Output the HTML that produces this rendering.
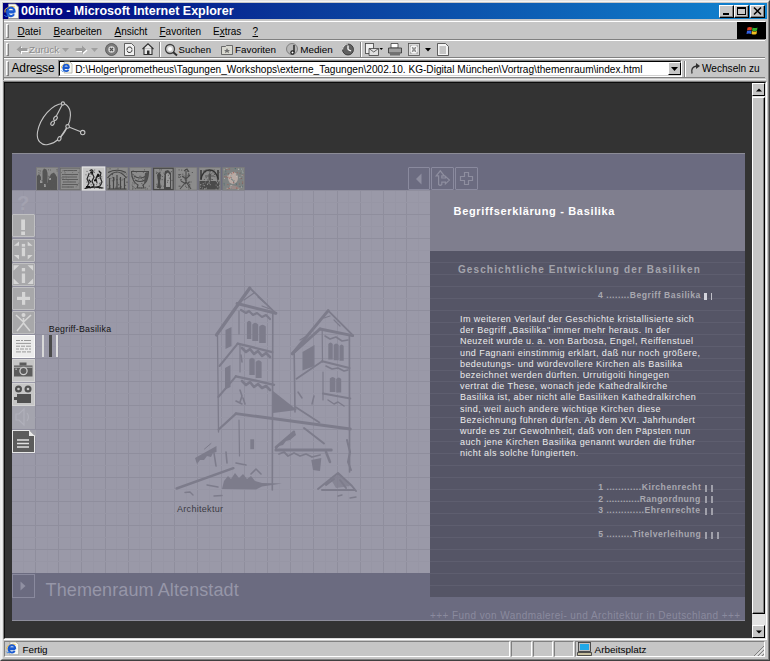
<!DOCTYPE html><html><head><meta charset="utf-8"><style>
*{margin:0;padding:0;box-sizing:border-box}
html,body{width:770px;height:661px;overflow:hidden;background:#c6c6c6;font-family:"Liberation Sans",sans-serif}
.ab{position:absolute}
.t{position:absolute;white-space:nowrap;line-height:1}
svg{position:absolute;overflow:visible}
u{text-decoration:underline;text-underline-offset:1px;text-decoration-thickness:1px}
</style></head><body>

<div class="ab" style="left:0px;top:0px;width:770px;height:661px;background:#c6c6c6;border-top:1px solid #e4e4e4;border-left:1px solid #ececec;border-right:1px solid #404040;border-bottom:1px solid #404040"></div>
<div class="ab" style="left:1px;top:1px;width:768px;height:659px;border-top:1px solid #f4f4f4;border-left:1px solid #f0f0f0;border-right:1px solid #808080;border-bottom:1px solid #808080"></div>
<div class="ab" style="left:2px;top:19px;width:1px;height:640px;background:#e0e0e0"></div>
<div class="ab" style="left:3px;top:3px;width:764px;height:16px;background:linear-gradient(90deg,#000080 0%,#0a3a9a 40%,#1084d0 100%)"></div>
<div class="t" style="left:21px;top:4px;font-size:12.5px;font-weight:bold;color:#fff;line-height:14px">00intro - Microsoft Internet Explorer</div>
<svg style="left:3px;top:3px" width="17" height="17" viewBox="0 0 17 17"><g transform="translate(0 0) scale(1)"><path d="M5.5 1h7l3 3v11.5h-10z" fill="#f8f8f0" stroke="#9a9a90" stroke-width="0.8"/><path d="M2 9.5 Q1 6 4 5 Q10 2.5 12 4" fill="none" stroke="#f0c040" stroke-width="1"/><path d="M11.5 9.3H4.3A3.6 3.6 0 0 0 11 11.2" fill="none" stroke="#1a5ad0" stroke-width="2.2"/><path d="M4.3 8.3A3.6 3.6 0 0 1 11.5 8.3z" fill="none" stroke="#1a5ad0" stroke-width="2.2"/><path d="M1.5 12 Q2 14.5 6 12.5" fill="none" stroke="#2a7ae0" stroke-width="1"/></g></svg>
<div class="ab" style="left:719px;top:5px;width:15px;height:13px;background:#c6c6c6;border-top:1px solid #fff;border-left:1px solid #fff;border-right:1px solid #000;border-bottom:1px solid #000"></div>
<div class="ab" style="left:720px;top:6px;width:13px;height:11px;border-right:1px solid #808080;border-bottom:1px solid #808080"></div>
<div class="ab" style="left:723px;top:13px;width:6px;height:2px;background:#000"></div>
<div class="ab" style="left:734px;top:5px;width:15px;height:13px;background:#c6c6c6;border-top:1px solid #fff;border-left:1px solid #fff;border-right:1px solid #000;border-bottom:1px solid #000"></div>
<div class="ab" style="left:735px;top:6px;width:13px;height:11px;border-right:1px solid #808080;border-bottom:1px solid #808080"></div>
<div class="ab" style="left:737px;top:7px;width:9px;height:8px;border:1px solid #000;border-top-width:2px"></div>
<div class="ab" style="left:750px;top:5px;width:15px;height:13px;background:#c6c6c6;border-top:1px solid #fff;border-left:1px solid #fff;border-right:1px solid #000;border-bottom:1px solid #000"></div>
<div class="ab" style="left:751px;top:6px;width:13px;height:11px;border-right:1px solid #808080;border-bottom:1px solid #808080"></div>
<svg style="left:753px;top:7px" width="9" height="8" viewBox="0 0 9 8"><path d="M1 0.5L8 7.5M8 0.5L1 7.5" stroke="#000" stroke-width="1.6"/></svg>
<div class="ab" style="left:4px;top:21px;width:761px;height:19px;border-top:1px solid #fff;border-bottom:1px solid #808080"></div>
<div class="ab" style="left:6px;top:24px;width:3px;height:14px;border-left:1px solid #fff;border-right:1px solid #808080;border-top:1px solid #fff;border-bottom:1px solid #808080"></div>
<div class="ab" style="left:4px;top:40px;width:761px;height:18px;border-top:1px solid #fff;border-bottom:1px solid #808080"></div>
<div class="ab" style="left:6px;top:43px;width:3px;height:13px;border-left:1px solid #fff;border-right:1px solid #808080;border-top:1px solid #fff;border-bottom:1px solid #808080"></div>
<div class="ab" style="left:4px;top:58px;width:761px;height:20px;border-top:1px solid #fff;border-bottom:1px solid #808080"></div>
<div class="ab" style="left:6px;top:61px;width:3px;height:15px;border-left:1px solid #fff;border-right:1px solid #808080;border-top:1px solid #fff;border-bottom:1px solid #808080"></div>
<div class="ab" style="left:3px;top:19px;width:1px;height:61px;background:#808080"></div>
<div class="ab" style="left:737px;top:22px;width:29px;height:17px;background:#000"></div>
<svg style="left:746px;top:24px" width="13" height="13" viewBox="0 0 13 13">
<path d="M1.5 3.5 Q4 2.5 6 3.5 L5.5 6.5 Q3.5 5.5 1 6.5z" fill="#e04020"/>
<path d="M6.5 3.5 Q9 4.5 11.5 3.5 L11 6.5 Q8.5 7.5 6 6.5z" fill="#30b030"/>
<path d="M1 7 Q3.5 6 5.5 7 L5 10 Q3 9 0.5 10z" fill="#3060e0"/>
<path d="M6 7 Q8.5 8 11 7 L10.5 10 Q8 11 5.5 10z" fill="#f0c020"/>
</svg>
<div class="t" style="left:17.5px;top:26px;font-size:10px;color:#000;line-height:11px"><u>D</u>atei</div>
<div class="t" style="left:53.5px;top:26px;font-size:10px;color:#000;line-height:11px"><u>B</u>earbeiten</div>
<div class="t" style="left:114.5px;top:26px;font-size:10px;color:#000;line-height:11px"><u>A</u>nsicht</div>
<div class="t" style="left:159.5px;top:26px;font-size:10px;color:#000;line-height:11px"><u>F</u>avoriten</div>
<div class="t" style="left:213px;top:26px;font-size:10px;color:#000;line-height:11px">E<u>x</u>tras</div>
<div class="t" style="left:252.5px;top:26px;font-size:10px;color:#000;line-height:11px"><u>?</u></div>
<svg style="left:16px;top:45px" width="13" height="11" viewBox="0 0 13 11"><path d="M1.5 5.5L6 1.5V4H12.5V7H6V9.5z" fill="#fff"/><path d="M0.5 4.5L5 0.5V3H11.5V6H5V8.5z" fill="#9c9c9c"/></svg>
<div class="t" style="left:29px;top:44px;font-size:9.6px;line-height:11px;font-size:9.9px;color:#8c8c8c;text-shadow:1px 1px 0 #f0f0f0">Zurück</div>
<svg style="left:62px;top:48px" width="7" height="4" viewBox="0 0 7 4"><path d="M0 0H7L3.5 4z" fill="#a0a0a0"/></svg>
<svg style="left:75px;top:45px" width="13" height="11" viewBox="0 0 13 11"><path d="M12.5 5.5L8 1.5V4H1.5V7H8V9.5z" fill="#fff"/><path d="M11.5 4.5L7 0.5V3H0.5V6H7V8.5z" fill="#9c9c9c"/></svg>
<svg style="left:91px;top:48px" width="7" height="4" viewBox="0 0 7 4"><path d="M0 0H7L3.5 4z" fill="#a0a0a0"/></svg>
<svg style="left:105px;top:43px" width="13" height="13" viewBox="0 0 13 13"><circle cx="6.5" cy="6.5" r="6" fill="#7a7a7a" stroke="#505050" stroke-width="0.8"/><circle cx="6.5" cy="6.5" r="3.2" fill="#d8d8d8"/><path d="M5 5L8 8M8 5L5 8" stroke="#505050" stroke-width="1.2"/></svg>
<svg style="left:124px;top:43px" width="11" height="13" viewBox="0 0 11 13"><path d="M0.5 0.5H7.5L10.5 3.5V12.5H0.5z" fill="#f0f0f0" stroke="#404040" stroke-width="0.8"/><path d="M3 7A2.5 2.5 0 0 1 8 6M8 6.5A2.5 2.5 0 0 1 3 7.5" stroke="#404040" stroke-width="1" fill="none"/></svg>
<svg style="left:142px;top:43px" width="12" height="12" viewBox="0 0 12 12"><path d="M0.5 6L6 0.8L11.5 6M2 5V11.5H10V5" fill="#e8e8e8" stroke="#303030" stroke-width="1.1"/><rect x="5" y="7.5" width="2.5" height="4" fill="#303030"/></svg>
<div class="ab" style="left:159px;top:42px;width:2px;height:15px;border-left:1px solid #808080;border-right:1px solid #fff"></div>
<svg style="left:164px;top:43px" width="14" height="13" viewBox="0 0 14 13"><circle cx="6" cy="6" r="4.5" fill="#d0d0d0" stroke="#404040" stroke-width="1.3"/><circle cx="6" cy="6" r="2" fill="#fff"/><path d="M9 9L13 12.5" stroke="#303030" stroke-width="2"/></svg>
<div class="t" style="left:178.5px;top:44px;font-size:9.6px;line-height:11px;color:#000">Suchen</div>
<svg style="left:221px;top:44px" width="12" height="11" viewBox="0 0 12 11"><path d="M0.5 2.5H4.5L5.5 1.5H11.5V10.5H0.5z" fill="#d8d8d0" stroke="#505050" stroke-width="0.8"/><path d="M6 4L7 6H9L7.5 7.3L8 9.3L6 8L4 9.3L4.5 7.3L3 6H5z" fill="#707070"/></svg>
<div class="t" style="left:235px;top:44px;font-size:9.6px;line-height:11px;font-size:9.85px;color:#000">Favoriten</div>
<svg style="left:286px;top:43px" width="13" height="13" viewBox="0 0 13 13"><circle cx="6" cy="6" r="5.5" fill="#b8b8b8" stroke="#707070" stroke-width="0.8"/><path d="M8 2V9" stroke="#202020" stroke-width="1.4"/><circle cx="6.5" cy="9.5" r="2.2" fill="#202020"/><circle cx="6.5" cy="9.5" r="1" fill="#fff"/></svg>
<div class="t" style="left:300.3px;top:44px;font-size:9.6px;line-height:11px;font-size:9.9px;color:#000">Medien</div>
<svg style="left:342px;top:43px" width="12" height="13" viewBox="0 0 12 13"><circle cx="6" cy="6.5" r="5.5" fill="#606060" stroke="#303030" stroke-width="0.8"/><path d="M6 6.5L6 2.5M6 6.5L9 8" stroke="#fff" stroke-width="1.3"/><path d="M0.5 6.5A5.5 5.5 0 0 1 6 1" stroke="#e0e0e0" stroke-width="1.2" fill="none"/></svg>
<div class="ab" style="left:360px;top:42px;width:2px;height:15px;border-left:1px solid #808080;border-right:1px solid #fff"></div>
<svg style="left:365px;top:43px" width="18" height="13" viewBox="0 0 18 13"><rect x="0.5" y="0.5" width="8" height="10" fill="#f0f0f0" stroke="#404040" stroke-width="0.8"/><path d="M4 5.5H13.5V12.5H4z" fill="#e0e0e0" stroke="#404040" stroke-width="0.8"/><path d="M4 5.5L8.75 9L13.5 5.5" stroke="#404040" stroke-width="0.8" fill="none"/><path d="M14.5 5H18L16.25 7z" fill="#000"/></svg>
<svg style="left:388px;top:43px" width="14" height="13" viewBox="0 0 14 13"><path d="M3 0.5H10V5H3z" fill="#fff" stroke="#404040" stroke-width="0.8"/><path d="M0.5 5H13.5V10H0.5z" fill="#a0a0a0" stroke="#303030" stroke-width="0.8"/><path d="M2 10H12V12.5H2z" fill="#707070"/></svg>
<svg style="left:408px;top:43px" width="12" height="13" viewBox="0 0 12 13"><rect x="0.5" y="0.5" width="11" height="12" fill="#d8d8d8" stroke="#505050" stroke-width="0.8"/><path d="M2.5 2.5L9.5 10.5M2.5 10.5L9.5 2.5" stroke="#909090" stroke-width="1.2"/><rect x="3.5" y="3.5" width="5" height="6" fill="none" stroke="#fff" stroke-width="0.8"/></svg>
<svg style="left:425px;top:48px" width="6" height="4" viewBox="0 0 6 4"><path d="M0 0H6L3 3.5z" fill="#000"/></svg>
<svg style="left:437px;top:43px" width="12" height="13" viewBox="0 0 12 13"><path d="M0.5 0.5H8.5L11.5 3.5V12.5H0.5z" fill="#f4f4f4" stroke="#404040" stroke-width="0.8"/><path d="M2.5 4H9M2.5 6H9M2.5 8H9M2.5 10H9" stroke="#808080" stroke-width="0.8"/></svg>
<div class="t" style="left:11.5px;top:62px;font-size:12px;letter-spacing:-0.15px;color:#000;line-height:13px">Adre<u>s</u>se</div>
<div class="ab" style="left:58px;top:60px;width:624px;height:17px;background:#fff;border-top:1px solid #808080;border-left:1px solid #808080;border-right:1px solid #fff;border-bottom:1px solid #fff"></div>
<div class="ab" style="left:59px;top:61px;width:622px;height:15px;border-top:1px solid #000;border-left:1px solid #000;border-right:1px solid #d0d0d0;border-bottom:1px solid #d0d0d0"></div>
<svg style="left:60px;top:61px" width="15" height="15" viewBox="0 0 17 17"><g transform="translate(0 0) scale(0.88)"><path d="M5.5 1h7l3 3v11.5h-10z" fill="#f8f8f0" stroke="#9a9a90" stroke-width="0.8"/><path d="M2 9.5 Q1 6 4 5 Q10 2.5 12 4" fill="none" stroke="#f0c040" stroke-width="1"/><path d="M11.5 9.3H4.3A3.6 3.6 0 0 0 11 11.2" fill="none" stroke="#1a5ad0" stroke-width="2.2"/><path d="M4.3 8.3A3.6 3.6 0 0 1 11.5 8.3z" fill="none" stroke="#1a5ad0" stroke-width="2.2"/><path d="M1.5 12 Q2 14.5 6 12.5" fill="none" stroke="#2a7ae0" stroke-width="1"/></g></svg>
<div class="t" style="left:75.3px;top:64px;font-size:10.1px;color:#000;line-height:12px">D:\Holger\prometheus\Tagungen_Workshops\externe_Tagungen\2002.10. KG-Digital München\Vortrag\themenraum\index.html</div>
<div class="ab" style="left:668px;top:62px;width:13px;height:13px;background:#c6c6c6;border-top:1px solid #fff;border-left:1px solid #fff;border-right:1px solid #000;border-bottom:1px solid #000"></div>
<svg style="left:671px;top:67px" width="7" height="4" viewBox="0 0 7 4"><path d="M0 0H7L3.5 4z" fill="#000"/></svg>
<div class="ab" style="left:684px;top:61px;width:2px;height:16px;border-left:1px solid #808080;border-right:1px solid #fff"></div>
<svg style="left:690px;top:62px" width="11" height="13" viewBox="0 0 11 13"><path d="M2 11.5Q0.5 5 6.5 4" stroke="#303030" stroke-width="1.3" fill="none"/><path d="M6 1L10 4L6 7z" fill="#303030"/></svg>
<div class="t" style="left:702px;top:63px;font-size:10.1px;color:#000;line-height:12px">Wechseln zu</div>
<div class="ab" style="left:3px;top:81px;width:764px;height:559px;border-top:1px solid #808080;border-left:1px solid #808080;border-right:1px solid #fff;border-bottom:1px solid #fff"></div>
<div class="ab" style="left:4px;top:82px;width:762px;height:557px;border-top:1px solid #0c0c0c;border-left:1px solid #0c0c0c;border-right:1px solid #dcdcdc;border-bottom:1px solid #dcdcdc"></div>
<div class="ab" style="left:5px;top:83px;width:747px;height:555px;background:#333"></div>
<div class="ab" style="left:4px;top:79px;width:762px;height:1px;background:#ececec"></div>
<div class="ab" style="left:12px;top:153px;width:733px;height:468px;background:#6b6b80;border-top:1px solid #8c8c96;border-bottom:1px solid #8e8e9c"></div>
<div class="ab" style="left:12px;top:190px;width:418px;height:383px;background:#9a99a8"></div>
<div class="ab" style="left:23px;top:190px;width:1px;height:383px;background:#9796a5"></div>
<div class="ab" style="left:35px;top:190px;width:1px;height:383px;background:#8f8e9d"></div>
<div class="ab" style="left:47px;top:190px;width:1px;height:383px;background:#9796a5"></div>
<div class="ab" style="left:58px;top:190px;width:1px;height:383px;background:#8f8e9d"></div>
<div class="ab" style="left:70px;top:190px;width:1px;height:383px;background:#9796a5"></div>
<div class="ab" style="left:81px;top:190px;width:1px;height:383px;background:#8f8e9d"></div>
<div class="ab" style="left:93px;top:190px;width:1px;height:383px;background:#9796a5"></div>
<div class="ab" style="left:105px;top:190px;width:1px;height:383px;background:#8f8e9d"></div>
<div class="ab" style="left:116px;top:190px;width:1px;height:383px;background:#9796a5"></div>
<div class="ab" style="left:128px;top:190px;width:1px;height:383px;background:#8f8e9d"></div>
<div class="ab" style="left:139px;top:190px;width:1px;height:383px;background:#9796a5"></div>
<div class="ab" style="left:151px;top:190px;width:1px;height:383px;background:#8f8e9d"></div>
<div class="ab" style="left:163px;top:190px;width:1px;height:383px;background:#9796a5"></div>
<div class="ab" style="left:174px;top:190px;width:1px;height:383px;background:#8f8e9d"></div>
<div class="ab" style="left:186px;top:190px;width:1px;height:383px;background:#9796a5"></div>
<div class="ab" style="left:197px;top:190px;width:1px;height:383px;background:#8f8e9d"></div>
<div class="ab" style="left:209px;top:190px;width:1px;height:383px;background:#9796a5"></div>
<div class="ab" style="left:221px;top:190px;width:1px;height:383px;background:#8f8e9d"></div>
<div class="ab" style="left:232px;top:190px;width:1px;height:383px;background:#9796a5"></div>
<div class="ab" style="left:244px;top:190px;width:1px;height:383px;background:#8f8e9d"></div>
<div class="ab" style="left:255px;top:190px;width:1px;height:383px;background:#9796a5"></div>
<div class="ab" style="left:267px;top:190px;width:1px;height:383px;background:#8f8e9d"></div>
<div class="ab" style="left:279px;top:190px;width:1px;height:383px;background:#9796a5"></div>
<div class="ab" style="left:290px;top:190px;width:1px;height:383px;background:#8f8e9d"></div>
<div class="ab" style="left:302px;top:190px;width:1px;height:383px;background:#9796a5"></div>
<div class="ab" style="left:313px;top:190px;width:1px;height:383px;background:#8f8e9d"></div>
<div class="ab" style="left:325px;top:190px;width:1px;height:383px;background:#9796a5"></div>
<div class="ab" style="left:337px;top:190px;width:1px;height:383px;background:#8f8e9d"></div>
<div class="ab" style="left:348px;top:190px;width:1px;height:383px;background:#9796a5"></div>
<div class="ab" style="left:360px;top:190px;width:1px;height:383px;background:#8f8e9d"></div>
<div class="ab" style="left:371px;top:190px;width:1px;height:383px;background:#9796a5"></div>
<div class="ab" style="left:383px;top:190px;width:1px;height:383px;background:#8f8e9d"></div>
<div class="ab" style="left:395px;top:190px;width:1px;height:383px;background:#9796a5"></div>
<div class="ab" style="left:406px;top:190px;width:1px;height:383px;background:#8f8e9d"></div>
<div class="ab" style="left:418px;top:190px;width:1px;height:383px;background:#9796a5"></div>
<div class="ab" style="left:12px;top:190px;width:418px;height:1px;background:#8f8e9d"></div>
<div class="ab" style="left:12px;top:202px;width:418px;height:1px;background:#9796a5"></div>
<div class="ab" style="left:12px;top:214px;width:418px;height:1px;background:#8f8e9d"></div>
<div class="ab" style="left:12px;top:226px;width:418px;height:1px;background:#9796a5"></div>
<div class="ab" style="left:12px;top:238px;width:418px;height:1px;background:#8f8e9d"></div>
<div class="ab" style="left:12px;top:250px;width:418px;height:1px;background:#9796a5"></div>
<div class="ab" style="left:12px;top:262px;width:418px;height:1px;background:#8f8e9d"></div>
<div class="ab" style="left:12px;top:274px;width:418px;height:1px;background:#9796a5"></div>
<div class="ab" style="left:12px;top:286px;width:418px;height:1px;background:#8f8e9d"></div>
<div class="ab" style="left:12px;top:298px;width:418px;height:1px;background:#9796a5"></div>
<div class="ab" style="left:12px;top:310px;width:418px;height:1px;background:#8f8e9d"></div>
<div class="ab" style="left:12px;top:322px;width:418px;height:1px;background:#9796a5"></div>
<div class="ab" style="left:12px;top:334px;width:418px;height:1px;background:#8f8e9d"></div>
<div class="ab" style="left:12px;top:346px;width:418px;height:1px;background:#9796a5"></div>
<div class="ab" style="left:12px;top:358px;width:418px;height:1px;background:#8f8e9d"></div>
<div class="ab" style="left:12px;top:370px;width:418px;height:1px;background:#9796a5"></div>
<div class="ab" style="left:12px;top:381px;width:418px;height:1px;background:#8f8e9d"></div>
<div class="ab" style="left:12px;top:393px;width:418px;height:1px;background:#9796a5"></div>
<div class="ab" style="left:12px;top:405px;width:418px;height:1px;background:#8f8e9d"></div>
<div class="ab" style="left:12px;top:417px;width:418px;height:1px;background:#9796a5"></div>
<div class="ab" style="left:12px;top:429px;width:418px;height:1px;background:#8f8e9d"></div>
<div class="ab" style="left:12px;top:441px;width:418px;height:1px;background:#9796a5"></div>
<div class="ab" style="left:12px;top:453px;width:418px;height:1px;background:#8f8e9d"></div>
<div class="ab" style="left:12px;top:465px;width:418px;height:1px;background:#9796a5"></div>
<div class="ab" style="left:12px;top:477px;width:418px;height:1px;background:#8f8e9d"></div>
<div class="ab" style="left:12px;top:489px;width:418px;height:1px;background:#9796a5"></div>
<div class="ab" style="left:12px;top:501px;width:418px;height:1px;background:#8f8e9d"></div>
<div class="ab" style="left:12px;top:513px;width:418px;height:1px;background:#9796a5"></div>
<div class="ab" style="left:12px;top:525px;width:418px;height:1px;background:#8f8e9d"></div>
<div class="ab" style="left:12px;top:537px;width:418px;height:1px;background:#9796a5"></div>
<div class="ab" style="left:12px;top:549px;width:418px;height:1px;background:#8f8e9d"></div>
<div class="ab" style="left:12px;top:561px;width:418px;height:1px;background:#9796a5"></div>
<div class="ab" style="left:430px;top:190px;width:315px;height:61px;background:#7f7e8e"></div>
<div class="ab" style="left:430px;top:251px;width:315px;height:346px;background:#555566"></div>
<div class="ab" style="left:430px;top:262px;width:315px;height:1px;background:#5e5e6f"></div>
<div class="ab" style="left:430px;top:274px;width:315px;height:1px;background:#5e5e6f"></div>
<div class="ab" style="left:430px;top:286px;width:315px;height:1px;background:#5e5e6f"></div>
<div class="ab" style="left:430px;top:298px;width:315px;height:1px;background:#5e5e6f"></div>
<div class="ab" style="left:430px;top:310px;width:315px;height:1px;background:#5e5e6f"></div>
<div class="ab" style="left:430px;top:322px;width:315px;height:1px;background:#5e5e6f"></div>
<div class="ab" style="left:430px;top:334px;width:315px;height:1px;background:#5e5e6f"></div>
<div class="ab" style="left:430px;top:346px;width:315px;height:1px;background:#5e5e6f"></div>
<div class="ab" style="left:430px;top:358px;width:315px;height:1px;background:#5e5e6f"></div>
<div class="ab" style="left:430px;top:370px;width:315px;height:1px;background:#5e5e6f"></div>
<div class="ab" style="left:430px;top:381px;width:315px;height:1px;background:#5e5e6f"></div>
<div class="ab" style="left:430px;top:393px;width:315px;height:1px;background:#5e5e6f"></div>
<div class="ab" style="left:430px;top:405px;width:315px;height:1px;background:#5e5e6f"></div>
<div class="ab" style="left:430px;top:417px;width:315px;height:1px;background:#5e5e6f"></div>
<div class="ab" style="left:430px;top:429px;width:315px;height:1px;background:#5e5e6f"></div>
<div class="ab" style="left:430px;top:441px;width:315px;height:1px;background:#5e5e6f"></div>
<div class="ab" style="left:430px;top:453px;width:315px;height:1px;background:#5e5e6f"></div>
<div class="ab" style="left:430px;top:465px;width:315px;height:1px;background:#5e5e6f"></div>
<div class="ab" style="left:430px;top:477px;width:315px;height:1px;background:#5e5e6f"></div>
<div class="ab" style="left:430px;top:489px;width:315px;height:1px;background:#5e5e6f"></div>
<div class="ab" style="left:430px;top:501px;width:315px;height:1px;background:#5e5e6f"></div>
<div class="ab" style="left:430px;top:513px;width:315px;height:1px;background:#5e5e6f"></div>
<div class="ab" style="left:430px;top:525px;width:315px;height:1px;background:#5e5e6f"></div>
<div class="ab" style="left:430px;top:537px;width:315px;height:1px;background:#5e5e6f"></div>
<div class="ab" style="left:430px;top:549px;width:315px;height:1px;background:#5e5e6f"></div>
<div class="ab" style="left:430px;top:561px;width:315px;height:1px;background:#5e5e6f"></div>
<div class="ab" style="left:430px;top:573px;width:315px;height:1px;background:#5e5e6f"></div>
<div class="ab" style="left:430px;top:585px;width:315px;height:1px;background:#5e5e6f"></div>
<svg style="left:0;top:0" width="770" height="661" viewBox="0 0 770 661">
<g fill="none" stroke="#c4c4c4" stroke-width="1.1">
<path d="M62.9 103.5 C52 104 40 118 37.5 132 C36 141 42 146 48 144.5 C56 143 63 136 67.6 126.4 C71 120 72 110 67 105.5 C66 104.5 64.5 103.5 62.9 103.5z"/>
<path d="M62.9 103.5 L55.3 118"/>
<path d="M67.6 126.4 L59.3 138.8"/>
<path d="M67.6 126.4 L82.7 132.6"/>
<ellipse cx="62.9" cy="103.5" rx="1.6" ry="1.6" fill="#333"/>
<ellipse cx="55.5" cy="118.3" rx="1.5" ry="2.3" transform="rotate(35 55.5 118.3)" fill="#333"/>
<ellipse cx="52.6" cy="123.2" rx="1.5" ry="2.3" transform="rotate(35 52.6 123.2)" fill="#333"/>
<ellipse cx="67.6" cy="126.4" rx="1.8" ry="1.8" fill="#333"/>
<ellipse cx="59.3" cy="138.8" rx="1.6" ry="2.2" transform="rotate(25 59.3 138.8)" fill="#333"/>
<ellipse cx="82.7" cy="132.6" rx="2.2" ry="2.2" fill="#333"/>
</g></svg>
<svg style="left:0;top:0" width="770" height="661" viewBox="0 0 770 661"><rect x="36.5" y="167.5" width="21.5" height="22.5" fill="#8c8c8c" stroke="#7a7a7a" stroke-width="0.8"/><rect x="60.0" y="167.5" width="21.5" height="22.5" fill="#8c8c8c" stroke="#7a7a7a" stroke-width="0.8"/><rect x="82.3" y="167" width="22.5" height="23" fill="#c6c6c6" stroke="#e4e4e4" stroke-width="1.2"/><rect x="106.5" y="167.5" width="21.5" height="22.5" fill="#8c8c8c" stroke="#7a7a7a" stroke-width="0.8"/><rect x="129.7" y="167.5" width="21.5" height="22.5" fill="#8c8c8c" stroke="#7a7a7a" stroke-width="0.8"/><rect x="153.2" y="167.5" width="21.5" height="22.5" fill="#8c8c8c" stroke="#7a7a7a" stroke-width="0.8"/><rect x="175.5" y="167.5" width="21.5" height="22.5" fill="#8c8c8c" stroke="#7a7a7a" stroke-width="0.8"/><rect x="199.0" y="167.5" width="21.5" height="22.5" fill="#8c8c8c" stroke="#7a7a7a" stroke-width="0.8"/><rect x="222.8" y="167.5" width="21.5" height="22.5" fill="#8c8c8c" stroke="#7a7a7a" stroke-width="0.8"/><g fill="#555555"><path d="M37 190V176L39 174L41 177V190z"/><path d="M42.5 190V171L44 168.5L46.5 169.5L47.5 173V190z"/><path d="M48 190V180L51 174L54 172.5L57 177V190z"/><path d="M38 183H57V190H38z"/></g><g fill="#9a9a9a"><rect x="40" y="180" width="2" height="3"/><rect x="49" y="178" width="2" height="2"/><rect x="44" y="184" width="2" height="3"/></g><rect x="43.5" y="171.2" width="1" height="1" fill="#5a5a5a" opacity="0.8"/><rect x="50.0" y="169.5" width="1" height="1" fill="#5a5a5a" opacity="0.8"/><rect x="47.7" y="175.7" width="1" height="1" fill="#5a5a5a" opacity="0.8"/><rect x="38.2" y="178.7" width="1" height="1" fill="#5a5a5a" opacity="0.8"/><rect x="37.7" y="177.1" width="1" height="1" fill="#5a5a5a" opacity="0.8"/><rect x="38.4" y="169.9" width="1" height="1" fill="#5a5a5a" opacity="0.8"/><rect x="45.5" y="185.4" width="1" height="1" fill="#5a5a5a" opacity="0.8"/><rect x="39.5" y="172.7" width="1" height="1" fill="#5a5a5a" opacity="0.8"/><rect x="49.5" y="187.9" width="1" height="1" fill="#5a5a5a" opacity="0.8"/><rect x="48.5" y="176.3" width="1" height="1" fill="#5a5a5a" opacity="0.8"/><rect x="56.5" y="169.0" width="1" height="1" fill="#5a5a5a" opacity="0.8"/><rect x="54.2" y="174.1" width="1" height="1" fill="#5a5a5a" opacity="0.8"/><rect x="39.9" y="170.5" width="1" height="1" fill="#5a5a5a" opacity="0.8"/><rect x="43.2" y="185.1" width="1" height="1" fill="#5a5a5a" opacity="0.8"/><rect x="40.6" y="180.2" width="1" height="1" fill="#5a5a5a" opacity="0.8"/><rect x="49.8" y="175.8" width="1" height="1" fill="#5a5a5a" opacity="0.8"/><rect x="48.0" y="169.3" width="1" height="1" fill="#5a5a5a" opacity="0.8"/><rect x="38.2" y="172.3" width="1" height="1" fill="#5a5a5a" opacity="0.8"/><rect x="50.6" y="177.0" width="1" height="1" fill="#5a5a5a" opacity="0.8"/><rect x="43.3" y="180.3" width="1" height="1" fill="#5a5a5a" opacity="0.8"/><rect x="46.1" y="174.3" width="1" height="1" fill="#5a5a5a" opacity="0.8"/><rect x="52.9" y="182.7" width="1" height="1" fill="#5a5a5a" opacity="0.8"/><rect x="41.9" y="180.1" width="1" height="1" fill="#5a5a5a" opacity="0.8"/><rect x="47.5" y="186.4" width="1" height="1" fill="#5a5a5a" opacity="0.8"/><rect x="51.6" y="174.0" width="1" height="1" fill="#5a5a5a" opacity="0.8"/><rect x="56.6" y="170.5" width="1" height="1" fill="#5a5a5a" opacity="0.8"/><rect x="45.4" y="183.9" width="1" height="1" fill="#5a5a5a" opacity="0.8"/><rect x="40.0" y="178.3" width="1" height="1" fill="#5a5a5a" opacity="0.8"/><rect x="37.8" y="182.0" width="1" height="1" fill="#5a5a5a" opacity="0.8"/><rect x="52.3" y="180.0" width="1" height="1" fill="#5a5a5a" opacity="0.8"/><rect x="54.5" y="174.6" width="1" height="1" fill="#5a5a5a" opacity="0.8"/><rect x="50.9" y="180.5" width="1" height="1" fill="#5a5a5a" opacity="0.8"/><rect x="48.6" y="177.6" width="1" height="1" fill="#5a5a5a" opacity="0.8"/><rect x="53.8" y="187.8" width="1" height="1" fill="#5a5a5a" opacity="0.8"/><rect x="46.5" y="181.9" width="1" height="1" fill="#5a5a5a" opacity="0.8"/><rect x="38.2" y="182.7" width="1" height="1" fill="#5a5a5a" opacity="0.8"/><rect x="49.9" y="188.9" width="1" height="1" fill="#5a5a5a" opacity="0.8"/><rect x="53.4" y="174.0" width="1" height="1" fill="#5a5a5a" opacity="0.8"/><rect x="44.7" y="182.0" width="1" height="1" fill="#5a5a5a" opacity="0.8"/><rect x="37.5" y="177.7" width="1" height="1" fill="#5a5a5a" opacity="0.8"/><g stroke="#505050" stroke-width="0.8"><path d="M63.5 170.5H77"/><path d="M62 174.5H78M62 177H77M62 179.5H78M63 182H76M62 184.5H78M62 187H74"/></g><rect x="60.5" y="168.5" width="19.5" height="21" fill="none" stroke="#6a6a6a" stroke-width="0.7"/><rect x="64.0" y="171.3" width="1" height="1" fill="#6a6a6a" opacity="0.8"/><rect x="62.1" y="184.4" width="1" height="1" fill="#6a6a6a" opacity="0.8"/><rect x="63.3" y="174.0" width="1" height="1" fill="#6a6a6a" opacity="0.8"/><rect x="68.0" y="186.4" width="1" height="1" fill="#6a6a6a" opacity="0.8"/><rect x="62.5" y="178.0" width="1" height="1" fill="#6a6a6a" opacity="0.8"/><rect x="70.9" y="186.7" width="1" height="1" fill="#6a6a6a" opacity="0.8"/><rect x="75.7" y="186.3" width="1" height="1" fill="#6a6a6a" opacity="0.8"/><rect x="66.0" y="177.3" width="1" height="1" fill="#6a6a6a" opacity="0.8"/><rect x="67.5" y="186.7" width="1" height="1" fill="#6a6a6a" opacity="0.8"/><rect x="78.2" y="172.0" width="1" height="1" fill="#6a6a6a" opacity="0.8"/><rect x="64.2" y="173.6" width="1" height="1" fill="#6a6a6a" opacity="0.8"/><rect x="65.2" y="178.7" width="1" height="1" fill="#6a6a6a" opacity="0.8"/><rect x="71.6" y="174.3" width="1" height="1" fill="#6a6a6a" opacity="0.8"/><rect x="61.1" y="177.4" width="1" height="1" fill="#6a6a6a" opacity="0.8"/><rect x="67.6" y="180.3" width="1" height="1" fill="#6a6a6a" opacity="0.8"/><rect x="78.2" y="182.8" width="1" height="1" fill="#6a6a6a" opacity="0.8"/><rect x="70.3" y="181.4" width="1" height="1" fill="#6a6a6a" opacity="0.8"/><rect x="73.2" y="170.1" width="1" height="1" fill="#6a6a6a" opacity="0.8"/><rect x="77.2" y="184.6" width="1" height="1" fill="#6a6a6a" opacity="0.8"/><rect x="76.7" y="185.0" width="1" height="1" fill="#6a6a6a" opacity="0.8"/><rect x="68.1" y="177.0" width="1" height="1" fill="#6a6a6a" opacity="0.8"/><rect x="62.9" y="181.7" width="1" height="1" fill="#6a6a6a" opacity="0.8"/><rect x="62.1" y="170.3" width="1" height="1" fill="#6a6a6a" opacity="0.8"/><rect x="64.8" y="172.2" width="1" height="1" fill="#6a6a6a" opacity="0.8"/><rect x="67.1" y="170.1" width="1" height="1" fill="#6a6a6a" opacity="0.8"/><rect x="61.0" y="172.0" width="1" height="1" fill="#6a6a6a" opacity="0.8"/><rect x="62.8" y="176.3" width="1" height="1" fill="#6a6a6a" opacity="0.8"/><rect x="61.5" y="186.5" width="1" height="1" fill="#6a6a6a" opacity="0.8"/><rect x="72.1" y="172.0" width="1" height="1" fill="#6a6a6a" opacity="0.8"/><rect x="65.5" y="175.9" width="1" height="1" fill="#6a6a6a" opacity="0.8"/><g fill="none" stroke="#1e1e1e" stroke-width="1.1" stroke-linecap="round"><path d="M90 170.5Q92 169 93 171L92.5 174L94 177L92 181L94 186L90 188"/><path d="M89 174L87 179L89 183L87 187M89 180L91 182"/><path d="M99 171L101 173L100 177L102 182L100 186L97 187"/><path d="M98 174L96 178L97 183M95 180L98 176"/><path d="M85 188.5Q93 186 103 188"/></g><g fill="#111"><ellipse cx="91.5" cy="172.5" rx="1.3" ry="1.2"/><ellipse cx="98.5" cy="175.5" rx="1.2" ry="1.4"/><ellipse cx="95" cy="180.5" rx="1.1" ry="1"/><rect x="86" y="186" width="4" height="2"/></g><rect x="91.2" y="171.3" width="1" height="1" fill="#3a3a3a" opacity="0.7"/><rect x="99.4" y="187.9" width="1" height="1" fill="#3a3a3a" opacity="0.7"/><rect x="92.9" y="178.2" width="1" height="1" fill="#3a3a3a" opacity="0.7"/><rect x="86.5" y="170.9" width="1" height="1" fill="#3a3a3a" opacity="0.7"/><rect x="90.8" y="174.0" width="1" height="1" fill="#3a3a3a" opacity="0.7"/><rect x="99.1" y="172.1" width="1" height="1" fill="#3a3a3a" opacity="0.7"/><rect x="85.4" y="187.1" width="1" height="1" fill="#3a3a3a" opacity="0.7"/><rect x="94.0" y="171.8" width="1" height="1" fill="#3a3a3a" opacity="0.7"/><rect x="94.2" y="169.5" width="1" height="1" fill="#3a3a3a" opacity="0.7"/><rect x="94.0" y="187.6" width="1" height="1" fill="#3a3a3a" opacity="0.7"/><rect x="99.7" y="182.2" width="1" height="1" fill="#3a3a3a" opacity="0.7"/><rect x="89.4" y="176.0" width="1" height="1" fill="#3a3a3a" opacity="0.7"/><rect x="87.8" y="183.7" width="1" height="1" fill="#3a3a3a" opacity="0.7"/><rect x="94.1" y="183.8" width="1" height="1" fill="#3a3a3a" opacity="0.7"/><rect x="90.6" y="173.2" width="1" height="1" fill="#3a3a3a" opacity="0.7"/><rect x="98.8" y="187.7" width="1" height="1" fill="#3a3a3a" opacity="0.7"/><rect x="99.5" y="184.3" width="1" height="1" fill="#3a3a3a" opacity="0.7"/><rect x="98.9" y="183.1" width="1" height="1" fill="#3a3a3a" opacity="0.7"/><rect x="88.9" y="178.8" width="1" height="1" fill="#3a3a3a" opacity="0.7"/><rect x="91.0" y="169.6" width="1" height="1" fill="#3a3a3a" opacity="0.7"/><rect x="85.5" y="174.3" width="1" height="1" fill="#3a3a3a" opacity="0.7"/><rect x="89.4" y="182.2" width="1" height="1" fill="#3a3a3a" opacity="0.7"/><rect x="101.3" y="177.5" width="1" height="1" fill="#3a3a3a" opacity="0.7"/><rect x="100.9" y="187.8" width="1" height="1" fill="#3a3a3a" opacity="0.7"/><rect x="101.2" y="175.9" width="1" height="1" fill="#3a3a3a" opacity="0.7"/><rect x="88.7" y="173.3" width="1" height="1" fill="#3a3a3a" opacity="0.7"/><rect x="88.3" y="172.9" width="1" height="1" fill="#3a3a3a" opacity="0.7"/><rect x="95.6" y="186.1" width="1" height="1" fill="#3a3a3a" opacity="0.7"/><rect x="99.3" y="178.1" width="1" height="1" fill="#3a3a3a" opacity="0.7"/><rect x="96.1" y="184.2" width="1" height="1" fill="#3a3a3a" opacity="0.7"/><rect x="86.4" y="181.6" width="1" height="1" fill="#3a3a3a" opacity="0.7"/><rect x="100.5" y="183.9" width="1" height="1" fill="#3a3a3a" opacity="0.7"/><rect x="97.8" y="178.1" width="1" height="1" fill="#3a3a3a" opacity="0.7"/><rect x="88.0" y="184.0" width="1" height="1" fill="#3a3a3a" opacity="0.7"/><rect x="90.7" y="184.2" width="1" height="1" fill="#3a3a3a" opacity="0.7"/><g fill="none" stroke="#454545" stroke-width="1.2"><path d="M107.5 178Q117 166 126.5 178"/><path d="M108 172.5Q117 168 126 172.5"/><path d="M109.5 178V189M113.5 177V189M117 175V189M120.5 177V189M124.5 178V189"/><path d="M107.5 189H126.5"/></g><rect x="126.4" y="176.3" width="1" height="1" fill="#4e4e4e" opacity="0.8"/><rect x="115.0" y="187.9" width="1" height="1" fill="#4e4e4e" opacity="0.8"/><rect x="121.5" y="171.6" width="1" height="1" fill="#4e4e4e" opacity="0.8"/><rect x="109.5" y="171.2" width="1" height="1" fill="#4e4e4e" opacity="0.8"/><rect x="125.1" y="184.9" width="1" height="1" fill="#4e4e4e" opacity="0.8"/><rect x="109.9" y="185.4" width="1" height="1" fill="#4e4e4e" opacity="0.8"/><rect x="126.6" y="181.8" width="1" height="1" fill="#4e4e4e" opacity="0.8"/><rect x="114.0" y="179.5" width="1" height="1" fill="#4e4e4e" opacity="0.8"/><rect x="109.6" y="168.3" width="1" height="1" fill="#4e4e4e" opacity="0.8"/><rect x="126.4" y="181.6" width="1" height="1" fill="#4e4e4e" opacity="0.8"/><rect x="117.5" y="187.6" width="1" height="1" fill="#4e4e4e" opacity="0.8"/><rect x="115.7" y="186.3" width="1" height="1" fill="#4e4e4e" opacity="0.8"/><rect x="123.5" y="172.4" width="1" height="1" fill="#4e4e4e" opacity="0.8"/><rect x="112.0" y="174.2" width="1" height="1" fill="#4e4e4e" opacity="0.8"/><rect x="111.8" y="180.3" width="1" height="1" fill="#4e4e4e" opacity="0.8"/><rect x="112.2" y="176.8" width="1" height="1" fill="#4e4e4e" opacity="0.8"/><rect x="109.6" y="187.1" width="1" height="1" fill="#4e4e4e" opacity="0.8"/><rect x="114.1" y="177.6" width="1" height="1" fill="#4e4e4e" opacity="0.8"/><rect x="118.7" y="187.0" width="1" height="1" fill="#4e4e4e" opacity="0.8"/><rect x="115.4" y="187.3" width="1" height="1" fill="#4e4e4e" opacity="0.8"/><rect x="117.0" y="179.2" width="1" height="1" fill="#4e4e4e" opacity="0.8"/><rect x="117.5" y="168.4" width="1" height="1" fill="#4e4e4e" opacity="0.8"/><rect x="115.8" y="171.8" width="1" height="1" fill="#4e4e4e" opacity="0.8"/><rect x="107.1" y="184.8" width="1" height="1" fill="#4e4e4e" opacity="0.8"/><rect x="110.4" y="177.9" width="1" height="1" fill="#4e4e4e" opacity="0.8"/><rect x="121.5" y="179.7" width="1" height="1" fill="#4e4e4e" opacity="0.8"/><rect x="113.5" y="178.9" width="1" height="1" fill="#4e4e4e" opacity="0.8"/><rect x="118.1" y="184.5" width="1" height="1" fill="#4e4e4e" opacity="0.8"/><rect x="109.1" y="179.8" width="1" height="1" fill="#4e4e4e" opacity="0.8"/><rect x="112.0" y="173.8" width="1" height="1" fill="#4e4e4e" opacity="0.8"/><rect x="122.4" y="178.7" width="1" height="1" fill="#4e4e4e" opacity="0.8"/><rect x="118.2" y="184.0" width="1" height="1" fill="#4e4e4e" opacity="0.8"/><rect x="125.2" y="177.3" width="1" height="1" fill="#4e4e4e" opacity="0.8"/><rect x="119.3" y="178.6" width="1" height="1" fill="#4e4e4e" opacity="0.8"/><rect x="117.2" y="182.5" width="1" height="1" fill="#4e4e4e" opacity="0.8"/><rect x="116.0" y="179.2" width="1" height="1" fill="#4e4e4e" opacity="0.8"/><rect x="116.6" y="187.8" width="1" height="1" fill="#4e4e4e" opacity="0.8"/><rect x="121.0" y="186.4" width="1" height="1" fill="#4e4e4e" opacity="0.8"/><rect x="125.8" y="173.5" width="1" height="1" fill="#4e4e4e" opacity="0.8"/><rect x="118.2" y="187.8" width="1" height="1" fill="#4e4e4e" opacity="0.8"/><g fill="none" stroke="#484848" stroke-width="1.1"><path d="M131 171.5H149M131.5 172Q132 182 138 185L137 188H144L143 185Q148 182 148.5 172"/><path d="M134 176Q140 180 146 176M135 180Q140 183 145 180"/></g><path d="M145 173L148.5 172Q148 181 144 184z" fill="#505050"/><rect x="146.1" y="171.7" width="1" height="1" fill="#505050" opacity="0.8"/><rect x="133.2" y="177.8" width="1" height="1" fill="#505050" opacity="0.8"/><rect x="132.3" y="173.8" width="1" height="1" fill="#505050" opacity="0.8"/><rect x="132.3" y="182.4" width="1" height="1" fill="#505050" opacity="0.8"/><rect x="145.1" y="186.9" width="1" height="1" fill="#505050" opacity="0.8"/><rect x="133.8" y="183.3" width="1" height="1" fill="#505050" opacity="0.8"/><rect x="142.9" y="171.9" width="1" height="1" fill="#505050" opacity="0.8"/><rect x="146.9" y="188.4" width="1" height="1" fill="#505050" opacity="0.8"/><rect x="135.0" y="188.1" width="1" height="1" fill="#505050" opacity="0.8"/><rect x="138.2" y="178.7" width="1" height="1" fill="#505050" opacity="0.8"/><rect x="148.8" y="185.6" width="1" height="1" fill="#505050" opacity="0.8"/><rect x="133.9" y="177.6" width="1" height="1" fill="#505050" opacity="0.8"/><rect x="140.3" y="175.8" width="1" height="1" fill="#505050" opacity="0.8"/><rect x="134.5" y="175.4" width="1" height="1" fill="#505050" opacity="0.8"/><rect x="144.0" y="169.4" width="1" height="1" fill="#505050" opacity="0.8"/><rect x="141.0" y="177.8" width="1" height="1" fill="#505050" opacity="0.8"/><rect x="131.3" y="175.6" width="1" height="1" fill="#505050" opacity="0.8"/><rect x="142.2" y="179.2" width="1" height="1" fill="#505050" opacity="0.8"/><rect x="132.2" y="188.7" width="1" height="1" fill="#505050" opacity="0.8"/><rect x="145.2" y="188.4" width="1" height="1" fill="#505050" opacity="0.8"/><rect x="132.9" y="174.3" width="1" height="1" fill="#505050" opacity="0.8"/><rect x="131.7" y="184.6" width="1" height="1" fill="#505050" opacity="0.8"/><rect x="135.9" y="171.6" width="1" height="1" fill="#505050" opacity="0.8"/><rect x="138.6" y="187.2" width="1" height="1" fill="#505050" opacity="0.8"/><rect x="145.7" y="174.2" width="1" height="1" fill="#505050" opacity="0.8"/><rect x="133.7" y="187.4" width="1" height="1" fill="#505050" opacity="0.8"/><rect x="141.3" y="183.0" width="1" height="1" fill="#505050" opacity="0.8"/><rect x="132.6" y="170.2" width="1" height="1" fill="#505050" opacity="0.8"/><rect x="143.4" y="177.5" width="1" height="1" fill="#505050" opacity="0.8"/><rect x="132.3" y="187.8" width="1" height="1" fill="#505050" opacity="0.8"/><rect x="142.4" y="185.0" width="1" height="1" fill="#505050" opacity="0.8"/><rect x="132.5" y="186.1" width="1" height="1" fill="#505050" opacity="0.8"/><rect x="132.2" y="186.3" width="1" height="1" fill="#505050" opacity="0.8"/><rect x="139.2" y="175.8" width="1" height="1" fill="#505050" opacity="0.8"/><rect x="141.0" y="187.5" width="1" height="1" fill="#505050" opacity="0.8"/><rect x="153.6" y="168.3" width="19.6" height="21.2" fill="none" stroke="#484848" stroke-width="1.2"/><g fill="#484848"><path d="M157 175L159 172L161 175L160 182L161 188H157L158 182z"/><path d="M165 171L168 170L171 173V189H164V180z"/></g><g fill="#9c9c9c"><path d="M166 174L168 172.5L170 175V187H166z"/></g><rect x="159.6" y="171.6" width="1" height="1" fill="#4a4a4a" opacity="0.8"/><rect x="164.0" y="173.8" width="1" height="1" fill="#4a4a4a" opacity="0.8"/><rect x="156.9" y="172.2" width="1" height="1" fill="#4a4a4a" opacity="0.8"/><rect x="155.9" y="173.0" width="1" height="1" fill="#4a4a4a" opacity="0.8"/><rect x="160.3" y="175.1" width="1" height="1" fill="#4a4a4a" opacity="0.8"/><rect x="167.9" y="174.8" width="1" height="1" fill="#4a4a4a" opacity="0.8"/><rect x="163.5" y="172.6" width="1" height="1" fill="#4a4a4a" opacity="0.8"/><rect x="160.9" y="169.4" width="1" height="1" fill="#4a4a4a" opacity="0.8"/><rect x="159.3" y="169.3" width="1" height="1" fill="#4a4a4a" opacity="0.8"/><rect x="167.5" y="180.0" width="1" height="1" fill="#4a4a4a" opacity="0.8"/><rect x="158.2" y="178.5" width="1" height="1" fill="#4a4a4a" opacity="0.8"/><rect x="170.9" y="171.1" width="1" height="1" fill="#4a4a4a" opacity="0.8"/><rect x="168.9" y="177.6" width="1" height="1" fill="#4a4a4a" opacity="0.8"/><rect x="163.4" y="185.7" width="1" height="1" fill="#4a4a4a" opacity="0.8"/><rect x="161.7" y="179.1" width="1" height="1" fill="#4a4a4a" opacity="0.8"/><rect x="166.7" y="188.6" width="1" height="1" fill="#4a4a4a" opacity="0.8"/><rect x="160.8" y="185.6" width="1" height="1" fill="#4a4a4a" opacity="0.8"/><rect x="167.0" y="181.7" width="1" height="1" fill="#4a4a4a" opacity="0.8"/><rect x="161.9" y="176.0" width="1" height="1" fill="#4a4a4a" opacity="0.8"/><rect x="155.9" y="171.6" width="1" height="1" fill="#4a4a4a" opacity="0.8"/><rect x="156.2" y="183.8" width="1" height="1" fill="#4a4a4a" opacity="0.8"/><rect x="159.3" y="172.3" width="1" height="1" fill="#4a4a4a" opacity="0.8"/><rect x="156.4" y="185.8" width="1" height="1" fill="#4a4a4a" opacity="0.8"/><rect x="169.8" y="182.4" width="1" height="1" fill="#4a4a4a" opacity="0.8"/><rect x="159.8" y="173.8" width="1" height="1" fill="#4a4a4a" opacity="0.8"/><rect x="160.0" y="178.2" width="1" height="1" fill="#4a4a4a" opacity="0.8"/><rect x="157.7" y="177.9" width="1" height="1" fill="#4a4a4a" opacity="0.8"/><rect x="159.5" y="188.2" width="1" height="1" fill="#4a4a4a" opacity="0.8"/><rect x="171.5" y="179.9" width="1" height="1" fill="#4a4a4a" opacity="0.8"/><rect x="159.2" y="188.3" width="1" height="1" fill="#4a4a4a" opacity="0.8"/><g fill="none" stroke="#4c4c4c" stroke-width="1.1"><path d="M180 189L186 182L191 189M186 182V171M182 176L186 179L190 175M181 181L186 184M184 171L187 169L189 172"/></g><rect x="182.3" y="176.1" width="1" height="1" fill="#4a4a4a" opacity="0.9"/><rect x="178.0" y="176.6" width="1" height="1" fill="#4a4a4a" opacity="0.9"/><rect x="184.6" y="179.1" width="1" height="1" fill="#4a4a4a" opacity="0.9"/><rect x="180.8" y="179.1" width="1" height="1" fill="#4a4a4a" opacity="0.9"/><rect x="178.1" y="174.3" width="1" height="1" fill="#4a4a4a" opacity="0.9"/><rect x="179.3" y="177.0" width="1" height="1" fill="#4a4a4a" opacity="0.9"/><rect x="178.6" y="169.4" width="1" height="1" fill="#4a4a4a" opacity="0.9"/><rect x="182.3" y="173.7" width="1" height="1" fill="#4a4a4a" opacity="0.9"/><rect x="186.2" y="179.6" width="1" height="1" fill="#4a4a4a" opacity="0.9"/><rect x="188.5" y="182.2" width="1" height="1" fill="#4a4a4a" opacity="0.9"/><rect x="188.0" y="186.6" width="1" height="1" fill="#4a4a4a" opacity="0.9"/><rect x="183.5" y="175.5" width="1" height="1" fill="#4a4a4a" opacity="0.9"/><rect x="191.8" y="172.0" width="1" height="1" fill="#4a4a4a" opacity="0.9"/><rect x="188.1" y="181.9" width="1" height="1" fill="#4a4a4a" opacity="0.9"/><rect x="178.6" y="185.7" width="1" height="1" fill="#4a4a4a" opacity="0.9"/><rect x="190.5" y="181.5" width="1" height="1" fill="#4a4a4a" opacity="0.9"/><rect x="188.3" y="185.2" width="1" height="1" fill="#4a4a4a" opacity="0.9"/><rect x="180.0" y="179.5" width="1" height="1" fill="#4a4a4a" opacity="0.9"/><rect x="185.1" y="185.7" width="1" height="1" fill="#4a4a4a" opacity="0.9"/><rect x="189.3" y="185.5" width="1" height="1" fill="#4a4a4a" opacity="0.9"/><rect x="186.2" y="186.9" width="1" height="1" fill="#4a4a4a" opacity="0.9"/><rect x="187.6" y="182.9" width="1" height="1" fill="#4a4a4a" opacity="0.9"/><rect x="181.2" y="169.6" width="1" height="1" fill="#4a4a4a" opacity="0.9"/><rect x="179.9" y="176.2" width="1" height="1" fill="#4a4a4a" opacity="0.9"/><rect x="179.5" y="185.7" width="1" height="1" fill="#4a4a4a" opacity="0.9"/><rect x="185.8" y="181.6" width="1" height="1" fill="#4a4a4a" opacity="0.9"/><rect x="186.8" y="182.6" width="1" height="1" fill="#4a4a4a" opacity="0.9"/><rect x="184.9" y="169.1" width="1" height="1" fill="#4a4a4a" opacity="0.9"/><rect x="189.2" y="184.0" width="1" height="1" fill="#4a4a4a" opacity="0.9"/><rect x="185.0" y="179.7" width="1" height="1" fill="#4a4a4a" opacity="0.9"/><rect x="187.2" y="170.3" width="1" height="1" fill="#4a4a4a" opacity="0.9"/><rect x="188.3" y="174.0" width="1" height="1" fill="#4a4a4a" opacity="0.9"/><rect x="179.0" y="174.3" width="1" height="1" fill="#4a4a4a" opacity="0.9"/><rect x="188.2" y="173.1" width="1" height="1" fill="#4a4a4a" opacity="0.9"/><rect x="188.4" y="188.5" width="1" height="1" fill="#4a4a4a" opacity="0.9"/><rect x="184.9" y="176.7" width="1" height="1" fill="#4a4a4a" opacity="0.9"/><rect x="184.7" y="182.7" width="1" height="1" fill="#4a4a4a" opacity="0.9"/><rect x="188.7" y="181.3" width="1" height="1" fill="#4a4a4a" opacity="0.9"/><rect x="187.0" y="170.5" width="1" height="1" fill="#4a4a4a" opacity="0.9"/><rect x="180.1" y="174.1" width="1" height="1" fill="#4a4a4a" opacity="0.9"/><rect x="188.4" y="175.1" width="1" height="1" fill="#4a4a4a" opacity="0.9"/><rect x="185.9" y="169.2" width="1" height="1" fill="#4a4a4a" opacity="0.9"/><rect x="178.8" y="174.4" width="1" height="1" fill="#4a4a4a" opacity="0.9"/><rect x="187.4" y="182.8" width="1" height="1" fill="#4a4a4a" opacity="0.9"/><rect x="187.5" y="174.8" width="1" height="1" fill="#4a4a4a" opacity="0.9"/><g fill="none" stroke="#333" stroke-width="1.4"><path d="M201 179Q203 170 209.5 170Q216 170 218 179"/><path d="M201 170V180M218 170V180"/></g><path d="M199.5 181H219.5V189.5H199.5z" fill="#4a4a4a"/><path d="M208.5 174H211V181H208.5z" fill="#555"/><path d="M205 176H214" stroke="#555" stroke-width="1"/><rect x="209.8" y="184.2" width="1" height="1" fill="#9a9a9a" opacity="0.8"/><rect x="208.9" y="181.1" width="1" height="1" fill="#9a9a9a" opacity="0.8"/><rect x="217.0" y="181.8" width="1" height="1" fill="#9a9a9a" opacity="0.8"/><rect x="218.6" y="188.4" width="1" height="1" fill="#9a9a9a" opacity="0.8"/><rect x="200.3" y="184.1" width="1" height="1" fill="#9a9a9a" opacity="0.8"/><rect x="215.6" y="188.7" width="1" height="1" fill="#9a9a9a" opacity="0.8"/><rect x="208.5" y="182.4" width="1" height="1" fill="#9a9a9a" opacity="0.8"/><rect x="204.0" y="188.5" width="1" height="1" fill="#9a9a9a" opacity="0.8"/><rect x="204.0" y="185.2" width="1" height="1" fill="#9a9a9a" opacity="0.8"/><rect x="202.7" y="184.7" width="1" height="1" fill="#9a9a9a" opacity="0.8"/><rect x="218.1" y="181.2" width="1" height="1" fill="#9a9a9a" opacity="0.8"/><rect x="215.6" y="184.6" width="1" height="1" fill="#9a9a9a" opacity="0.8"/><rect x="216.9" y="186.3" width="1" height="1" fill="#9a9a9a" opacity="0.8"/><rect x="204.4" y="188.1" width="1" height="1" fill="#9a9a9a" opacity="0.8"/><rect x="209.2" y="180.2" width="1" height="1" fill="#9a9a9a" opacity="0.8"/><rect x="200.1" y="184.4" width="1" height="1" fill="#9a9a9a" opacity="0.8"/><rect x="208.6" y="182.7" width="1" height="1" fill="#9a9a9a" opacity="0.8"/><rect x="202.7" y="183.1" width="1" height="1" fill="#9a9a9a" opacity="0.8"/><rect x="206.0" y="187.6" width="1" height="1" fill="#9a9a9a" opacity="0.8"/><rect x="200.0" y="186.8" width="1" height="1" fill="#9a9a9a" opacity="0.8"/><rect x="215.9" y="181.1" width="1" height="1" fill="#9a9a9a" opacity="0.8"/><rect x="217.6" y="186.4" width="1" height="1" fill="#9a9a9a" opacity="0.8"/><rect x="217.1" y="182.6" width="1" height="1" fill="#9a9a9a" opacity="0.8"/><rect x="207.1" y="183.5" width="1" height="1" fill="#9a9a9a" opacity="0.8"/><rect x="219.0" y="185.3" width="1" height="1" fill="#9a9a9a" opacity="0.8"/><rect x="206.9" y="183.9" width="1" height="1" fill="#9a9a9a" opacity="0.8"/><rect x="205.2" y="180.4" width="1" height="1" fill="#9a9a9a" opacity="0.8"/><rect x="201.9" y="187.5" width="1" height="1" fill="#9a9a9a" opacity="0.8"/><rect x="205.4" y="188.4" width="1" height="1" fill="#9a9a9a" opacity="0.8"/><rect x="204.7" y="182.4" width="1" height="1" fill="#9a9a9a" opacity="0.8"/><rect x="209.7" y="171.1" width="1" height="1" fill="#4a4a4a" opacity="0.8"/><rect x="207.1" y="179.5" width="1" height="1" fill="#4a4a4a" opacity="0.8"/><rect x="216.8" y="177.9" width="1" height="1" fill="#4a4a4a" opacity="0.8"/><rect x="212.0" y="179.0" width="1" height="1" fill="#4a4a4a" opacity="0.8"/><rect x="217.9" y="175.0" width="1" height="1" fill="#4a4a4a" opacity="0.8"/><rect x="213.7" y="169.5" width="1" height="1" fill="#4a4a4a" opacity="0.8"/><rect x="213.9" y="174.0" width="1" height="1" fill="#4a4a4a" opacity="0.8"/><rect x="214.3" y="176.1" width="1" height="1" fill="#4a4a4a" opacity="0.8"/><rect x="205.4" y="169.5" width="1" height="1" fill="#4a4a4a" opacity="0.8"/><rect x="217.6" y="170.4" width="1" height="1" fill="#4a4a4a" opacity="0.8"/><rect x="209.0" y="172.8" width="1" height="1" fill="#4a4a4a" opacity="0.8"/><rect x="205.7" y="177.1" width="1" height="1" fill="#4a4a4a" opacity="0.8"/><rect x="218.5" y="171.9" width="1" height="1" fill="#4a4a4a" opacity="0.8"/><rect x="212.5" y="172.3" width="1" height="1" fill="#4a4a4a" opacity="0.8"/><rect x="210.6" y="173.3" width="1" height="1" fill="#4a4a4a" opacity="0.8"/><rect x="203.2" y="170.8" width="1" height="1" fill="#4a4a4a" opacity="0.8"/><rect x="203.9" y="179.0" width="1" height="1" fill="#4a4a4a" opacity="0.8"/><rect x="209.4" y="171.4" width="1" height="1" fill="#4a4a4a" opacity="0.8"/><rect x="217.2" y="180.0" width="1" height="1" fill="#4a4a4a" opacity="0.8"/><rect x="208.5" y="170.5" width="1" height="1" fill="#4a4a4a" opacity="0.8"/><rect x="203.7" y="170.0" width="1" height="1" fill="#4a4a4a" opacity="0.8"/><rect x="206.5" y="170.0" width="1" height="1" fill="#4a4a4a" opacity="0.8"/><rect x="204.5" y="171.8" width="1" height="1" fill="#4a4a4a" opacity="0.8"/><rect x="210.8" y="178.8" width="1" height="1" fill="#4a4a4a" opacity="0.8"/><rect x="214.2" y="173.5" width="1" height="1" fill="#4a4a4a" opacity="0.8"/><rect x="223" y="168" width="20.5" height="21.5" fill="#7e8282"/><ellipse cx="233" cy="178" rx="5" ry="6" fill="#b8aaa4"/><path d="M226 189Q233 182 241 189z" fill="#9a8a88"/><rect x="231.3" y="179.0" width="1" height="1" fill="#4a6a70" opacity="0.7"/><rect x="230.5" y="175.1" width="1" height="1" fill="#4a6a70" opacity="0.7"/><rect x="224.2" y="173.8" width="1" height="1" fill="#4a6a70" opacity="0.7"/><rect x="242.4" y="170.6" width="1" height="1" fill="#4a6a70" opacity="0.7"/><rect x="233.1" y="181.2" width="1" height="1" fill="#4a6a70" opacity="0.7"/><rect x="240.3" y="172.5" width="1" height="1" fill="#4a6a70" opacity="0.7"/><rect x="228.4" y="173.2" width="1" height="1" fill="#4a6a70" opacity="0.7"/><rect x="231.0" y="177.4" width="1" height="1" fill="#4a6a70" opacity="0.7"/><rect x="242.1" y="185.8" width="1" height="1" fill="#4a6a70" opacity="0.7"/><rect x="240.5" y="168.5" width="1" height="1" fill="#4a6a70" opacity="0.7"/><rect x="223.6" y="182.9" width="1" height="1" fill="#4a6a70" opacity="0.7"/><rect x="240.9" y="177.9" width="1" height="1" fill="#4a6a70" opacity="0.7"/><rect x="234.7" y="168.0" width="1" height="1" fill="#4a6a70" opacity="0.7"/><rect x="230.8" y="187.5" width="1" height="1" fill="#4a6a70" opacity="0.7"/><rect x="239.5" y="186.0" width="1" height="1" fill="#4a6a70" opacity="0.7"/><rect x="242.4" y="173.2" width="1" height="1" fill="#4a6a70" opacity="0.7"/><rect x="225.2" y="171.2" width="1" height="1" fill="#4a6a70" opacity="0.7"/><rect x="233.4" y="182.3" width="1" height="1" fill="#4a6a70" opacity="0.7"/><rect x="241.8" y="183.2" width="1" height="1" fill="#4a6a70" opacity="0.7"/><rect x="235.9" y="184.1" width="1" height="1" fill="#4a6a70" opacity="0.7"/><rect x="232.1" y="179.6" width="1" height="1" fill="#4a6a70" opacity="0.7"/><rect x="223.8" y="184.4" width="1" height="1" fill="#4a6a70" opacity="0.7"/><rect x="227.7" y="187.3" width="1" height="1" fill="#4a6a70" opacity="0.7"/><rect x="235.9" y="174.4" width="1" height="1" fill="#4a6a70" opacity="0.7"/><rect x="225.6" y="173.3" width="1" height="1" fill="#4a6a70" opacity="0.7"/><rect x="235.7" y="182.7" width="1" height="1" fill="#4a6a70" opacity="0.7"/><rect x="225.2" y="169.5" width="1" height="1" fill="#4a6a70" opacity="0.7"/><rect x="233.5" y="180.2" width="1" height="1" fill="#4a6a70" opacity="0.7"/><rect x="230.8" y="172.7" width="1" height="1" fill="#4a6a70" opacity="0.7"/><rect x="235.0" y="168.2" width="1" height="1" fill="#4a6a70" opacity="0.7"/><rect x="229.0" y="177.7" width="1" height="1" fill="#a05a50" opacity="0.7"/><rect x="242.2" y="181.5" width="1" height="1" fill="#a05a50" opacity="0.7"/><rect x="240.7" y="178.0" width="1" height="1" fill="#a05a50" opacity="0.7"/><rect x="227.7" y="173.2" width="1" height="1" fill="#a05a50" opacity="0.7"/><rect x="242.2" y="182.8" width="1" height="1" fill="#a05a50" opacity="0.7"/><rect x="229.1" y="168.5" width="1" height="1" fill="#a05a50" opacity="0.7"/><rect x="233.0" y="182.2" width="1" height="1" fill="#a05a50" opacity="0.7"/><rect x="231.4" y="173.4" width="1" height="1" fill="#a05a50" opacity="0.7"/><rect x="236.3" y="187.4" width="1" height="1" fill="#a05a50" opacity="0.7"/><rect x="227.5" y="168.7" width="1" height="1" fill="#a05a50" opacity="0.7"/><rect x="229.8" y="176.8" width="1" height="1" fill="#a05a50" opacity="0.7"/><rect x="236.7" y="172.2" width="1" height="1" fill="#a05a50" opacity="0.7"/><rect x="238.9" y="183.5" width="1" height="1" fill="#a05a50" opacity="0.7"/><rect x="233.1" y="172.3" width="1" height="1" fill="#a05a50" opacity="0.7"/><rect x="242.4" y="174.5" width="1" height="1" fill="#a05a50" opacity="0.7"/><rect x="239.4" y="172.8" width="1" height="1" fill="#a05a50" opacity="0.7"/><rect x="227.4" y="184.0" width="1" height="1" fill="#a05a50" opacity="0.7"/><rect x="228.9" y="188.0" width="1" height="1" fill="#a05a50" opacity="0.7"/><rect x="232.9" y="171.9" width="1" height="1" fill="#a05a50" opacity="0.7"/><rect x="227.5" y="176.8" width="1" height="1" fill="#a05a50" opacity="0.7"/><rect x="236.3" y="187.9" width="1" height="1" fill="#a05a50" opacity="0.7"/><rect x="225.9" y="176.3" width="1" height="1" fill="#a05a50" opacity="0.7"/><rect x="227.3" y="188.5" width="1" height="1" fill="#a05a50" opacity="0.7"/><rect x="225.8" y="169.1" width="1" height="1" fill="#a05a50" opacity="0.7"/><rect x="224.2" y="176.3" width="1" height="1" fill="#a05a50" opacity="0.7"/><rect x="241.0" y="186.6" width="1" height="1" fill="#d0d0c8" opacity="0.6"/><rect x="237.7" y="188.9" width="1" height="1" fill="#d0d0c8" opacity="0.6"/><rect x="241.6" y="174.9" width="1" height="1" fill="#d0d0c8" opacity="0.6"/><rect x="226.7" y="187.7" width="1" height="1" fill="#d0d0c8" opacity="0.6"/><rect x="237.9" y="168.7" width="1" height="1" fill="#d0d0c8" opacity="0.6"/><rect x="236.3" y="176.0" width="1" height="1" fill="#d0d0c8" opacity="0.6"/><rect x="230.5" y="175.0" width="1" height="1" fill="#d0d0c8" opacity="0.6"/><rect x="226.4" y="168.1" width="1" height="1" fill="#d0d0c8" opacity="0.6"/><rect x="228.6" y="175.4" width="1" height="1" fill="#d0d0c8" opacity="0.6"/><rect x="242.1" y="170.6" width="1" height="1" fill="#d0d0c8" opacity="0.6"/><rect x="242.3" y="172.4" width="1" height="1" fill="#d0d0c8" opacity="0.6"/><rect x="230.1" y="185.3" width="1" height="1" fill="#d0d0c8" opacity="0.6"/><rect x="239.4" y="177.1" width="1" height="1" fill="#d0d0c8" opacity="0.6"/><rect x="224.0" y="177.9" width="1" height="1" fill="#d0d0c8" opacity="0.6"/><rect x="230.5" y="187.3" width="1" height="1" fill="#d0d0c8" opacity="0.6"/><rect x="226.9" y="175.6" width="1" height="1" fill="#d0d0c8" opacity="0.6"/><rect x="240.9" y="168.6" width="1" height="1" fill="#d0d0c8" opacity="0.6"/><rect x="231.2" y="185.0" width="1" height="1" fill="#d0d0c8" opacity="0.6"/><rect x="238.3" y="168.9" width="1" height="1" fill="#d0d0c8" opacity="0.6"/><rect x="223.7" y="169.3" width="1" height="1" fill="#d0d0c8" opacity="0.6"/></svg>
<div class="ab" style="left:408px;top:167px;width:22px;height:23px;border:1px solid #8a8a9e;border-radius:1px"></div>
<div class="ab" style="left:431px;top:167px;width:23px;height:23px;border:1px solid #8a8a9e;border-radius:1px"></div>
<div class="ab" style="left:455px;top:167px;width:23px;height:23px;border:1px solid #8a8a9e;border-radius:1px"></div>
<svg style="left:0;top:0" width="770" height="661" viewBox="0 0 770 661">
<path d="M421.5 173.5V184.5L416 179z" fill="#8e8e9f"/>
<g fill="none" stroke="#8e8e9f" stroke-width="1.2">
<path d="M438.6 184.5V175.8H436.2L440.3 170.8L444.3 175.8H441.8V178H445.4V176.3L449.4 180.1L445.4 183.9V182.2H441.8V184.5Q440.2 186 438.6 184.5z"/>
<path d="M464.5 172.5H468.5V176.5H472.5V180.5H468.5V184.5H464.5V180.5H460.5V176.5H464.5z"/>
</g></svg>
<div class="t" style="left:17px;top:192px;font-size:20px;font-weight:bold;color:#a3a2b0;line-height:22px">?</div>
<div class="ab" style="left:12px;top:214px;width:23px;height:23px;background:#a8a8aa;border:1px solid #c0c0c2;border-radius:1px"></div>
<div class="ab" style="left:12px;top:239px;width:23px;height:23px;background:#a8a8aa;border:1px solid #c0c0c2;border-radius:1px"></div>
<div class="ab" style="left:12px;top:263px;width:23px;height:23px;background:#a8a8aa;border:1px solid #c0c0c2;border-radius:1px"></div>
<div class="ab" style="left:12px;top:287px;width:23px;height:23px;background:#a8a8aa;border:1px solid #c0c0c2;border-radius:1px"></div>
<div class="ab" style="left:12px;top:311px;width:23px;height:23px;background:#a8a8aa;border:1px solid #c0c0c2;border-radius:1px"></div>
<div class="ab" style="left:12px;top:335px;width:23px;height:23px;background:#ececec;border:1px solid #fafafa"></div>
<div class="ab" style="left:12px;top:359px;width:23px;height:23px;background:#c6c6c6;border:1px solid #d4d4d4"></div>
<div class="ab" style="left:12px;top:383px;width:23px;height:23px;background:#c6c6c6;border:1px solid #d4d4d4"></div>
<div class="ab" style="left:12px;top:406px;width:23px;height:23px;background:#a4a4ae"></div>
<div class="ab" style="left:12px;top:430px;width:23px;height:23px;background:#5c5c5c;border:1px solid #e8e8e8"></div>
<svg style="left:0;top:0" width="770" height="661" viewBox="0 0 770 661">
<g fill="#d6d6d6">
<rect x="21.2" y="219.5" width="3.8" height="10.5"/><rect x="21.2" y="231.5" width="3.8" height="3.5"/>
<path d="M13.9 245.8L19 241.5V245.8zM32.6 245.8L27.7 241.5V245.8zM13.9 254.9H19V259.6zM32.6 254.9H27.7V259.6z" />
<rect x="21.8" y="247.8" width="3.3" height="8.4"/><rect x="21.8" y="243.9" width="3.3" height="2.8"/>
<path d="M13.5 265.2H19.2L13.5 270.8zM33.2 265.2H27.5L33.2 270.8zM13.5 284H19.2L13.5 278.4zM33.2 284H27.5L33.2 278.4z"/>
<rect x="21.8" y="273.5" width="3.3" height="9.5"/><rect x="21.8" y="268" width="3.3" height="3.3"/>
<rect x="22" y="292" width="3.2" height="12.8"/><rect x="17" y="296.8" width="13" height="3.2"/>
<circle cx="23.5" cy="315" r="2"/>
</g>
<g stroke="#d6d6d6" stroke-width="1.6" fill="none">
<path d="M16 315L23.5 322L31 315M23.5 318V324M17 331L23.5 323L30 331"/>
</g>
<g stroke="#7e7e7e" stroke-width="0.75">
<path d="M16 340.5H20M21 340.5H23M24 340.5H31M16 343.4H31M16 346.2H20M21 346.2H25M26 346.2H31M16 349H19M20 349H24M25 349H28M29 349H31M16 351.9H21M22 351.9H26M27 351.9H31"/>
</g>
<g fill="#5c5c5c">
<rect x="14" y="365.5" width="18.5" height="11"/>
<rect x="19.5" y="362.5" width="7" height="3"/>
</g>
<circle cx="23.5" cy="371" r="3.6" fill="#5c5c5c" stroke="#d0d0d0" stroke-width="1.2"/>
<rect x="14" y="366.8" width="18.5" height="0.9" fill="#c0c0c0"/>
<rect x="15.5" y="368.5" width="1.2" height="1.5" fill="#c0c0c0"/>
<g fill="#505050">
<circle cx="18.5" cy="389" r="3.5"/><circle cx="28" cy="389" r="3.5"/>
<rect x="17" y="394" width="14" height="9"/><rect x="14" y="397" width="3" height="3"/>
</g>
<circle cx="18.5" cy="389" r="1.3" fill="#c6c6c6"/><circle cx="28" cy="389" r="1.3" fill="#c6c6c6"/>
<g fill="none" stroke="#b0b0ba" stroke-width="1.2">
<path d="M16 414H19L24 409V425L19 420H16z"/><path d="M27 413Q30 417 27 421"/>
</g>
<path d="M29 430H36V437z" fill="#a0a0aa"/>
<path d="M29 430L35 436H29z" fill="#e8e8e8"/>
<g stroke="#e0e0e0" stroke-width="1.5">
<path d="M17 440H29M17 443.5H29M17 447H29"/>
</g>
</svg>
<div class="ab" style="left:42px;top:335px;width:2px;height:22px;background:#d8d8d8"></div>
<div class="ab" style="left:49px;top:335px;width:3px;height:22px;background:#4a4a4a"></div>
<div class="ab" style="left:56px;top:335px;width:2px;height:22px;background:#e0e0e0"></div>
<svg style="left:0;top:0" width="770" height="661" viewBox="0 0 770 661">
<g stroke="#7d7c8b" fill="none" stroke-linecap="round" stroke-linejoin="round">
<!-- left tower roof -->
<path d="M249.8 288 L216.5 335" stroke-width="3.2"/>
<path d="M249.8 288 L275.8 313.3" stroke-width="1.8"/>
<path d="M237.1 303.5 L275.8 313.3" stroke-width="3"/>
<path d="M244 300 L254 293 M258 297 L265 303 M262 306 L270 309" stroke-width="1.2"/>
<!-- left tower walls -->
<path d="M217.5 336 L218.5 432" stroke-width="1.3"/>
<path d="M239 311 L239 334 M240 345 L240 372 M239 420 L239.5 456" stroke-width="1.2"/>
<path d="M272.8 314 L272.3 490" stroke-width="1.6"/>
<!-- bands -->
<path d="M237.7 343.6 L272.2 352.1" stroke-width="2.4"/>
<path d="M237.7 343.6 L219.5 366" stroke-width="2"/>
<path d="M235.9 376.3 L274 384.8" stroke-width="2.4"/>
<path d="M235.9 376.3 L218.3 397" stroke-width="2"/>
<path d="M236 413.6 L350.3 429" stroke-width="2.8"/>
<path d="M236 413.6 L218.6 429.5" stroke-width="2.2"/>
<!-- lombard ragged -->
<path d="M241 310 L246 313 L249 311 L253 315 L257 313 L262 317 L266 315 L270 319" stroke-width="2.2"/>
<path d="M242 348 L246 352 L250 349 L254 354 L258 351 L262 356 L266 353 L270 357" stroke-width="2.6"/>
<path d="M242 381 L246 385 L250 382 L254 387 L258 384 L262 388 L266 386 L270 390" stroke-width="2.6"/>
<path d="M241 355 L242 362 M240 390 L242 396 L240 402 M243 398 L245 404" stroke-width="1.6"/>
<!-- right tower roof -->
<path d="M328.2 310.6 L292.4 353.7" stroke-width="3"/>
<path d="M328.2 310.6 L353.2 335.6" stroke-width="1.8"/>
<path d="M320 329 L352.5 335.6" stroke-width="3"/>
<path d="M320 329 L292.4 353.7" stroke-width="3"/>
<path d="M324 318 L330 316 M334 320 L340 326 M300 340 L310 334" stroke-width="1.2"/>
<!-- right tower walls -->
<path d="M294.2 354 L295 412" stroke-width="1.6"/>
<path d="M322.2 331 L322.5 362 M323 372 L323 400" stroke-width="1.2"/>
<path d="M349.4 336 L349.6 472" stroke-width="1.6"/>
<path d="M322.2 361.3 L349.4 368" stroke-width="2.2"/>
<path d="M322.2 361.3 L296.5 378.7" stroke-width="1.8"/>
<path d="M323 393.6 L350.3 398.5" stroke-width="2"/>
<path d="M325 336 L330 339 L336 337 L342 341 L348 340" stroke-width="1.6"/>
<path d="M326 366 L332 369 L338 368 L344 371 L348 370" stroke-width="1.6"/>
<path d="M328 400 L334 404 L338 402 L344 406 M298 392 L302 398 M312 404 L314 396" stroke-width="1.5"/>
<path d="M347 440 L350 452 L348 462 L351 470" stroke-width="2"/>
<!-- nave -->
<path d="M295.9 407.2 L319.4 422.6" stroke-width="1.8"/>
<path d="M275.9 447.2 L294 431.7" stroke-width="2.5"/>
<path d="M304 428 L324 443.5" stroke-width="2"/>
<path d="M275.9 450 L331.2 449.9" stroke-width="3"/>
<path d="M279 454 L284 452 L288 456 L294 453 L300 456 L306 454 L312 457 L320 455" stroke-width="1.8"/>
<path d="M326 452 L330 462" stroke-width="2.5"/>
<!-- left aisle and ground -->
<path d="M204.5 449 L211 443.5" stroke-width="1"/>
<path d="M214 453 L216 466 M226 452 L227 463" stroke-width="1.6"/>
<path d="M236 463 L246 465 M251 474 L256 469 L261 474" stroke-width="1.6"/>
<path d="M176.6 488.5 L233.4 468.2" stroke-width="2.4"/>
<path d="M185 492.5 L190 492 L193 495 M214 496 L222 495.5 M207 485 L218 487" stroke-width="1.4"/>
<path d="M236 401 L242 404" stroke-width="1.6"/>
<!-- right rubble -->
<path d="M318 489 L338 473 L352 486 L356 491 M326 485 L334 479 M340 480 L346 488 M322 490 L354 490" stroke-width="2"/>
<path d="M338 496 L342 495 M350 498 L356 497" stroke-width="1.4"/>
</g>
<g fill="#7d7c8b">
<!-- windows left tower -->
<path d="M246.9 322.5Q249.1 319 251.3 322.5V339.1H246.9z M252.3 324.5Q255.2 321 258.2 324.5V341H252.3z M259.2 326.5Q262.5 323 265.8 326.5V343H259.2z"/>
<path d="M225.5 330 L231.5 327 L231.5 346 L225.5 349z"/>
<path d="M249.3 359.5Q252 356 254.7 359.5V375H249.3z M255.7 362Q258.6 358.5 261.6 362V377.9H255.7z"/>
<path d="M225 368 L230.5 365 L230.5 387 L225 389.5z"/>
<rect x="250.3" y="439.3" width="3.8" height="9.9"/>
<!-- windows right tower -->
<path d="M328.3 344Q330.5 341 332.7 344V359.5H328.3z M333.7 345Q336.2 342 338.7 345V360.2H333.7z M339.5 346Q341.6 343 343.7 346V360.8H339.5z"/>
<path d="M302.5 352 L314.5 345 L314.5 366 L302.5 370.5z"/>
<path d="M329.8 378.5Q332.6 375.5 335.4 378.5V392H329.8z M336.2 379Q338.7 376 341.2 379V392.5H336.2z"/>
<path d="M195 458 L216.5 446 L216.5 452 L213 453 L211 457 L207 456 L204 460 L200 460 L197 464z"/>
<path d="M222 489 L224 481 L228 476 L231 479 L235 473 L239 478 L243 474 L247 479 L251 476 L255 481 L262 483 L282 483.6 L262 486.5 L256 489.5z"/>
<path d="M274.8 448 L295 432 L296 435 L290 440 L286 441 L283 445 L279 446 L276 450z"/>
<!-- nave triangle -->
<path d="M273 391 L297 410 L273 413z"/>
<path d="M311.3 460 L321.3 458 L320 471 L313 470z"/>
<path d="M330 478 L340 474 L350 486 L336 488z" opacity="0.7"/>
</g>
</svg>
<div class="t" style="left:48.8px;top:324px;font-size:8.8px;color:#141414;letter-spacing:0.25px;line-height:10px">Begriff-Basilika</div>
<div class="t" style="left:177px;top:504px;font-size:9px;color:#3a3a44;letter-spacing:0.3px;line-height:10px">Architektur</div>
<div class="ab" style="left:12px;top:574px;width:23px;height:24px;border:1px solid #8a8a9e"></div>
<svg style="left:20px;top:581px" width="6" height="10" viewBox="0 0 6 10"><path d="M0.5 0.5V9.5L5.5 5z" fill="#9090a2"/></svg>
<div class="t" style="left:45.6px;top:580px;font-size:18px;color:#9696a8;letter-spacing:0.1px;line-height:20px">Themenraum Altenstadt</div>
<div class="t" style="left:430px;top:610px;font-size:10px;color:#8a8a9e;letter-spacing:0.42px;line-height:11px">+++ Fund von Wandmalerei- und Architektur in Deutschland +++</div>
<div class="t" style="left:453.6px;top:205px;font-size:11px;font-weight:bold;color:#ffffff;letter-spacing:0.66px;line-height:12px">Begriffserklärung - Basilika</div>
<div class="t" style="left:457.9px;top:264px;font-size:10px;font-weight:bold;color:#a4a4ac;letter-spacing:1.13px;line-height:11px">Geschichtliche Entwicklung der Basiliken</div>
<div class="t" style="left:598px;top:290px;font-size:8.6px;font-weight:bold;color:#a8a8b0;letter-spacing:0.54px;line-height:10px">4 ........Begriff Basilika</div>
<div class="ab" style="left:704px;top:293px;width:3px;height:7px;background:#d4d4dc"></div>
<div class="ab" style="left:711px;top:293px;width:1px;height:7px;background:#c0c0c8"></div>
<div class="ab" style="left:460px;top:314px;font-size:9px;line-height:11.2px;color:#ececec;letter-spacing:0.43px;white-space:nowrap"><div>Im weiteren Verlauf der Geschichte kristallisierte sich</div><div>der Begriff „Basilika" immer mehr heraus. In der</div><div>Neuzeit wurde u. a. von Barbosa, Engel, Reiffenstuel</div><div>und Fagnani einstimmig erklärt, daß nur noch größere,</div><div>bedeutungs- und würdevollere Kirchen als Basilika</div><div>bezeichnet werden dürften. Urrutigoiti hingegen</div><div>vertrat die These, wonach jede Kathedralkirche</div><div>Basilika ist, aber nicht alle Basiliken Kathedralkirchen</div><div>sind, weil auch andere wichtige Kirchen diese</div><div>Bezeichnung führen dürfen. Ab dem XVI. Jahrhundert</div><div>wurde es zur Gewohnheit, daß von den Päpsten nun</div><div>auch jene Kirchen Basilika genannt wurden die früher</div><div>nicht als solche füngierten.</div></div>
<div class="t" style="left:598.2px;top:482px;font-size:8.6px;font-weight:bold;color:#a8a8b0;line-height:10px;letter-spacing:0.55px">1 ............Kirchenrecht</div>
<div class="ab" style="left:705px;top:484.5px;width:2px;height:7px;background:#a0a0aa"></div>
<div class="ab" style="left:711px;top:484.5px;width:2px;height:7px;background:#a0a0aa"></div>
<div class="t" style="left:598.2px;top:493.5px;font-size:8.6px;font-weight:bold;color:#a8a8b0;line-height:10px;letter-spacing:0.41px">2 ............Rangordnung</div>
<div class="ab" style="left:705px;top:496.0px;width:2px;height:7px;background:#a0a0aa"></div>
<div class="ab" style="left:711px;top:496.0px;width:2px;height:7px;background:#a0a0aa"></div>
<div class="t" style="left:598.2px;top:505.3px;font-size:8.6px;font-weight:bold;color:#a8a8b0;line-height:10px;letter-spacing:0.54px">3 .............Ehrenrechte</div>
<div class="ab" style="left:705px;top:507.8px;width:2px;height:7px;background:#a0a0aa"></div>
<div class="ab" style="left:711px;top:507.8px;width:2px;height:7px;background:#a0a0aa"></div>
<div class="t" style="left:598.2px;top:529px;font-size:8.6px;font-weight:bold;color:#a8a8b0;line-height:10px;letter-spacing:0.52px">5 .........Titelverleihung</div>
<div class="ab" style="left:705px;top:531.5px;width:2px;height:7px;background:#a0a0aa"></div>
<div class="ab" style="left:711px;top:531.5px;width:2px;height:7px;background:#a0a0aa"></div>
<div class="ab" style="left:717px;top:531.5px;width:2px;height:7px;background:#a0a0aa"></div>
<div class="ab" style="left:752px;top:83px;width:13px;height:555px;background:#e4e4e4"></div>
<div class="ab" style="left:752px;top:83px;width:13px;height:13px;background:#c6c6c6;border-top:1px solid #fff;border-left:1px solid #fff;border-right:1px solid #000;border-bottom:1px solid #000"></div>
<svg style="left:755.5px;top:87.5px" width="6" height="4" viewBox="0 0 6 4"><path d="M0 3.5H6L3 0.5z" fill="#000"/></svg>
<div class="ab" style="left:752px;top:97px;width:13px;height:517px;background:#c6c6c6;border-top:1px solid #fff;border-left:1px solid #fff;border-right:1px solid #000;border-bottom:1px solid #000"></div>
<div class="ab" style="left:753px;top:98px;width:11px;height:515px;border-right:1px solid #808080;border-bottom:1px solid #808080"></div>
<div class="ab" style="left:752px;top:625px;width:13px;height:13px;background:#c6c6c6;border-top:1px solid #fff;border-left:1px solid #fff;border-right:1px solid #000;border-bottom:1px solid #000"></div>
<svg style="left:755.5px;top:629.5px" width="6" height="4" viewBox="0 0 6 4"><path d="M0 0.5H6L3 3.5z" fill="#000"/></svg>
<div class="ab" style="left:4px;top:641px;width:506px;height:16px;border-top:1px solid #808080;border-left:1px solid #808080;border-right:1px solid #fff;border-bottom:1px solid #fff"></div>
<div class="ab" style="left:511px;top:641px;width:21px;height:16px;border-top:1px solid #808080;border-left:1px solid #808080;border-right:1px solid #fff;border-bottom:1px solid #fff"></div>
<div class="ab" style="left:533px;top:641px;width:20px;height:16px;border-top:1px solid #808080;border-left:1px solid #808080;border-right:1px solid #fff;border-bottom:1px solid #fff"></div>
<div class="ab" style="left:554px;top:641px;width:20px;height:16px;border-top:1px solid #808080;border-left:1px solid #808080;border-right:1px solid #fff;border-bottom:1px solid #fff"></div>
<div class="ab" style="left:575px;top:641px;width:190px;height:16px;border-top:1px solid #808080;border-left:1px solid #808080;border-right:1px solid #fff;border-bottom:1px solid #fff"></div>
<svg style="left:5px;top:641px" width="16" height="16" viewBox="0 0 17 17"><g transform="translate(0 0) scale(0.94)"><path d="M5.5 1h7l3 3v11.5h-10z" fill="#f8f8f0" stroke="#9a9a90" stroke-width="0.8"/><path d="M2 9.5 Q1 6 4 5 Q10 2.5 12 4" fill="none" stroke="#f0c040" stroke-width="1"/><path d="M11.5 9.3H4.3A3.6 3.6 0 0 0 11 11.2" fill="none" stroke="#1a5ad0" stroke-width="2.2"/><path d="M4.3 8.3A3.6 3.6 0 0 1 11.5 8.3z" fill="none" stroke="#1a5ad0" stroke-width="2.2"/><path d="M1.5 12 Q2 14.5 6 12.5" fill="none" stroke="#2a7ae0" stroke-width="1"/></g></svg>
<div class="t" style="left:22.5px;top:644px;font-size:9.8px;color:#000;line-height:11px">Fertig</div>
<svg style="left:577px;top:642px" width="15" height="14" viewBox="0 0 15 14">
<rect x="1.5" y="0.5" width="12" height="9" fill="#c0c0c0" stroke="#303030" stroke-width="0.8"/>
<rect x="3" y="2" width="9" height="6" fill="#20a8e8"/>
<path d="M0.5 10.5H14.5V13.5H0.5z" fill="#c8c0a0" stroke="#303030" stroke-width="0.8"/>
</svg>
<div class="t" style="left:594.5px;top:644px;font-size:9.95px;color:#000;line-height:11px">Arbeitsplatz</div>
<svg style="left:753px;top:645px" width="12" height="12" viewBox="0 0 12 12"><path d="M11 1L1 11M11 5L5 11M11 9L9 11" stroke="#808080" stroke-width="1"/><path d="M11.8 1.8L1.8 11.8M11.8 5.8L5.8 11.8" stroke="#fff" stroke-width="0.8"/></svg>
</body></html>
